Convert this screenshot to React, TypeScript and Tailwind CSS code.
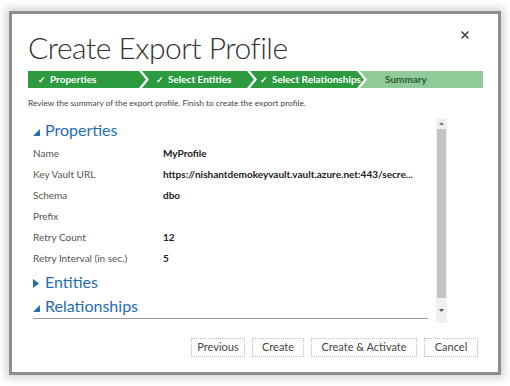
import { X } from "lucide-react";

const font = { fontFamily: 'Lato, "Open Sans", sans-serif' };

const steps = [
  { label: "Properties", done: true, w: "w-[118px]", pl: "pl-[10px]" },
  { label: "Select Entities", done: true, w: "w-[112px]", pl: "pl-[14px]" },
  { label: "Select Relationships", done: true, w: "w-[114px]", pl: "pl-[10px]" },
  { label: "Summary", done: false, w: "w-[123px]", pl: "pl-[25px]" },
];

const rows = [
  ["Name", "MyProfile"],
  ["Key Vault URL", "https://nishantdemokeyvault.vault.azure.net:443/secre..."],
  ["Schema", "dbo"],
  ["Prefix", ""],
  ["Retry Count", "12"],
  ["Retry Interval (in sec.)", "5"],
];

function Caret({ open }: { open: boolean }) {
  return open ? (
    <svg width="7" height="7" viewBox="0 0 7 7" className="mr-[5px] mt-[4px]">
      <path d="M7 0 L7 7 L0 7 Z" fill="#1f6db5" />
    </svg>
  ) : (
    <svg width="6" height="9" viewBox="0 0 6 9" className="mr-[6px] mt-[2px]">
      <path d="M0 0 L6 4.5 L0 9 Z" fill="#1f6db5" />
    </svg>
  );
}

export default function App() {
  return (
    <div
      className="w-[510px] h-[386px] bg-white pt-[11px] pl-[9px] overflow-hidden"
      style={font}
    >
      <div className="relative w-[492px] h-[364px] border-[3px] border-[#8d8d8d] bg-white shadow-[0_0_8px_3px_rgba(0,0,0,0.18)] px-[16px] pt-[13px]">
        <button
          type="button"
          className="absolute right-[27px] top-[15px] text-[#444]"
        >
          <X size={12} strokeWidth={3.2} />
        </button>

        <h1 className="text-[30px] font-light leading-[40px] tracking-[-0.5px] text-[#333]">
          Create Export Profile
        </h1>

        <div className="mt-[4px] flex h-[17px] w-[455px]">
          {steps.map((s, i) => (
            <div
              key={s.label}
              className={`${s.w} ${s.pl} ${i > 0 ? "-ml-[4px]" : ""} flex h-full items-center text-[10px] font-bold ${
                s.done
                  ? "bg-[#2c9b40] text-white"
                  : "bg-[#8fca98] text-[#2e5b36]"
              } ${
                i === 0
                  ? "[clip-path:polygon(0_0,calc(100%-7px)_0,100%_50%,calc(100%-7px)_100%,0_100%)]"
                  : i === 3
                  ? "[clip-path:polygon(0_0,100%_0,100%_100%,0_100%,7px_50%)]"
                  : "[clip-path:polygon(0_0,calc(100%-7px)_0,100%_50%,calc(100%-7px)_100%,0_100%,7px_50%)]"
              }`}
            >
              {s.done && <span className="mr-[4px] text-[9px]">✓</span>}
              <span className="whitespace-nowrap">{s.label}</span>
            </div>
          ))}
        </div>

        <p className="mt-[9px] text-[8.3px] text-[#444] leading-[12px]">
          Review the summary of the export profile. Finish to create the export
          profile.
        </p>

        <div className="mt-[9px] flex w-[419px] h-[205px]">
          <div className="flex-1 pl-[5px] pr-[8px]">
            <div className="flex items-center text-[#1f6db5] text-[16px] leading-[24px]">
              <Caret open />
              <span>Properties</span>
            </div>
            <div className="mt-[1px]">
              {rows.map(([k, v]) => (
                <div key={k} className="flex h-[21px] items-center text-[10px]">
                  <span className="w-[130px] text-[#555]">{k}</span>
                  <span className="w-[262px] truncate font-bold text-[#222]">
                    {v}
                  </span>
                </div>
              ))}
            </div>
            <div className="mt-[1px] flex items-center text-[#1f6db5] text-[16px] leading-[24px]">
              <Caret open={false} />
              <span>Entities</span>
            </div>
            <div className="flex items-center text-[#1f6db5] text-[16px] leading-[24px] border-b border-[#999]">
              <Caret open />
              <span>Relationships</span>
            </div>
          </div>
          <div className="flex w-[11px] flex-col bg-[#f0f0f0]">
            <div className="flex h-[11px] items-center justify-center">
              <svg width="5" height="3" viewBox="0 0 5 3">
                <path d="M0 3 L2.5 0 L5 3 Z" fill="#777" />
              </svg>
            </div>
            <div className="mx-[1px] h-[169px] bg-[#c4c4c4]" />
            <div className="flex flex-1 items-center justify-center">
              <svg width="5" height="3" viewBox="0 0 5 3">
                <path d="M0 0 L2.5 3 L5 0 Z" fill="#555" />
              </svg>
            </div>
          </div>
        </div>

        <div className="mt-[15px] flex justify-end gap-[7px] pr-[4px] text-[11px] text-[#444]">
          {["Previous", "Create", "Create & Activate", "Cancel"].map((b) => (
            <button
              key={b}
              type="button"
              className={`h-[19px] border border-dotted border-[#bdbdbd] bg-white ${
                b === "Create & Activate" ? "w-[106px]" : b === "Create" ? "w-[52px]" : "w-[54px]"
              }`}
            >
              {b}
            </button>
          ))}
        </div>
      </div>
    </div>
  );
}
